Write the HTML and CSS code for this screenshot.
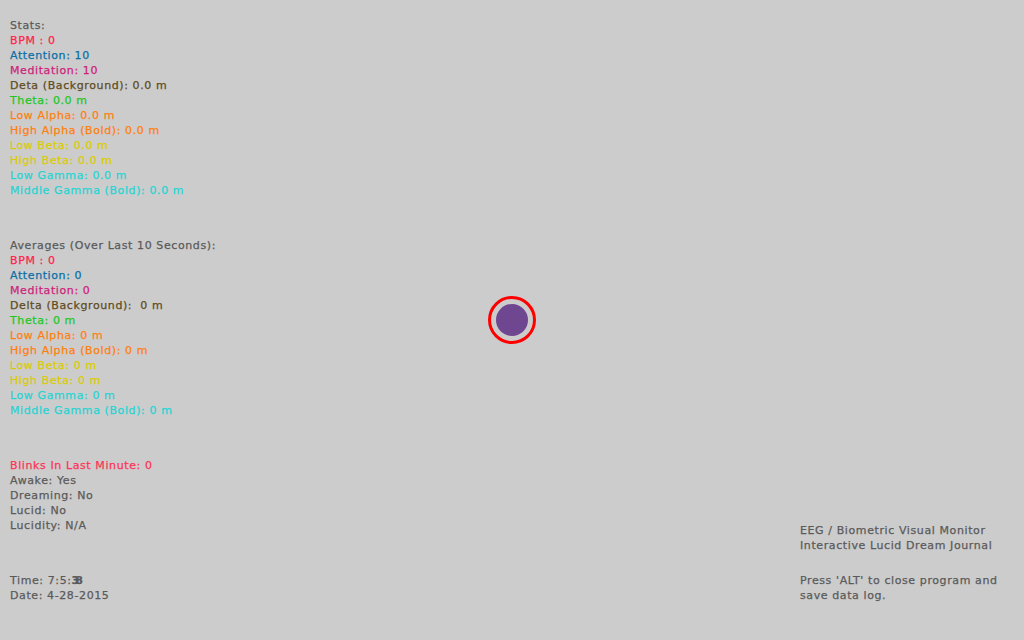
FILE: index.html
```html
<!DOCTYPE html>
<html>
<head>
<meta charset="utf-8">
<link rel="stylesheet" href="styles.css">
</head>
<body>
<div class="screen">
  <div class="left">
    <div class="block">
      <div class="gray">Stats:</div>
      <div class="red">BPM : 0</div>
      <div class="blue">Attention: 10</div>
      <div class="pink">Meditation: 10</div>
      <div class="brown">Deta (Background): 0.0 m</div>
      <div class="green">Theta: 0.0 m</div>
      <div class="orange">Low Alpha: 0.0 m</div>
      <div class="orange">High Alpha (Bold): 0.0 m</div>
      <div class="yellow">Low Beta: 0.0 m</div>
      <div class="yellow">High Beta: 0.0 m</div>
      <div class="cyan">Low Gamma: 0.0 m</div>
      <div class="cyan">Middle Gamma (Bold): 0.0 m</div>
    </div>
    <div class="block">
      <div class="gray">Averages (Over Last 10 Seconds):</div>
      <div class="red">BPM : 0</div>
      <div class="blue">Attention: 0</div>
      <div class="pink">Meditation: 0</div>
      <div class="brown">Delta (Background):&nbsp; 0 m</div>
      <div class="green">Theta: 0 m</div>
      <div class="orange">Low Alpha: 0 m</div>
      <div class="orange">High Alpha (Bold): 0 m</div>
      <div class="yellow">Low Beta: 0 m</div>
      <div class="yellow">High Beta: 0 m</div>
      <div class="cyan">Low Gamma: 0 m</div>
      <div class="cyan">Middle Gamma (Bold): 0 m</div>
    </div>
    <div class="block">
      <div class="blink">Blinks In Last Minute: 0</div>
      <div class="gray">Awake: Yes</div>
      <div class="gray">Dreaming: No</div>
      <div class="gray">Lucid: No</div>
      <div class="gray">Lucidity: N/A</div>
    </div>
    <div class="block">
      <div class="gray">Time: 7:5:<span class="garble">38</span></div>
      <div class="gray">Date: 4-28-2015</div>
    </div>
  </div>
  <div class="right">
    <div class="block">
      <div class="gray">EEG / Biometric Visual Monitor</div>
      <div class="gray">Interactive Lucid Dream Journal</div>
    </div>
    <div class="block">
      <div class="gray">Press 'ALT' to close program and</div>
      <div class="gray">save data log.</div>
    </div>
  </div>
  <div class="orb"><div class="core"></div></div>
</div>
</body>
</html>
```
FILE: styles.css
```css
html, body {
  margin: 0;
  padding: 0;
  background: #cccccc;
}
.screen {
  position: relative;
  width: 1024px;
  height: 640px;
  box-sizing: border-box;
  padding: 18px 0 0 10px;
  display: flex;
  font-family: "DejaVu Sans", Verdana, sans-serif;
  font-size: 11px;
  line-height: 15px;
  letter-spacing: 0.6px;
  -webkit-text-stroke: 0.25px;
  white-space: nowrap;
}
.left {
  display: flex;
  flex-direction: column;
  gap: 40px;
  width: 790px;
}
.right {
  display: flex;
  flex-direction: column;
  justify-content: flex-end;
  padding-bottom: 37px;
  gap: 20px;
}
.gray { color: #5a5a5a; }
.red { color: #ff1f4b; }
.blink { color: #ff3355; }
.blue { color: #0a6fa6; }
.pink { color: #cc1f7a; }
.brown { color: #5f4b1c; }
.green { color: #22c722; }
.orange { color: #ff7f0e; }
.yellow { color: #dccb00; }
.cyan { color: #26d4d4; }
.garble {
  letter-spacing: -4px;
  font-weight: bold;
}
.orb {
  position: absolute;
  left: 488px;
  top: 296px;
  width: 42px;
  height: 42px;
  border: 3px solid #ff0000;
  border-radius: 50%;
  display: flex;
  align-items: center;
  justify-content: center;
}
.core {
  width: 32px;
  height: 32px;
  border-radius: 50%;
  background: #6f4690;
}
```
